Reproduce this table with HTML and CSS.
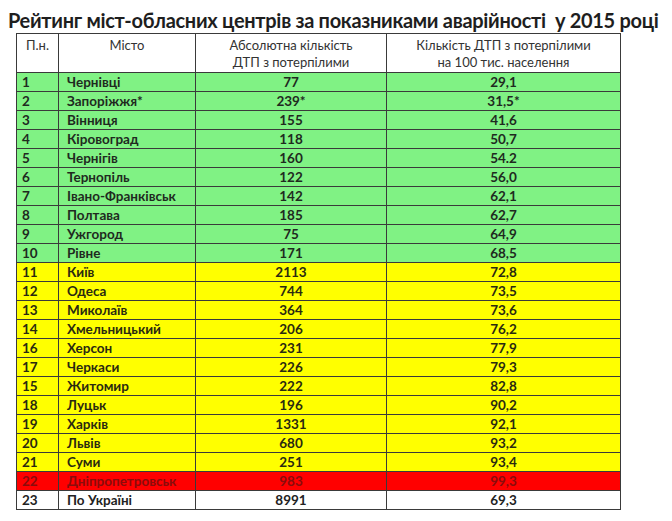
FILE: index.html
```html
<!DOCTYPE html>
<html lang="uk">
<head>
<meta charset="utf-8">
<link rel="stylesheet" href="styles.css">
</head>
<body>
<div class="page">
  <h1 class="title">Рейтинг міст-обласних центрів за показниками аварійності&nbsp; у 2015 році</h1>
  <table class="rating">
    <colgroup>
      <col class="c-num"><col class="c-city"><col class="c-abs"><col class="c-rel">
    </colgroup>
    <thead>
      <tr><th>П.н.</th><th>Місто</th><th>Абсолютна кількість<br>ДТП з потерпілими</th><th>Кількість ДТП з потерпілими<br>на 100 тис. населення</th></tr>
    </thead>
    <tbody>
      <tr class="g"><td>1</td><td>Чернівці</td><td>77</td><td>29,1</td></tr>
      <tr class="g"><td>2</td><td>Запоріжжя*</td><td>239*</td><td>31,5*</td></tr>
      <tr class="g"><td>3</td><td>Вінниця</td><td>155</td><td>41,6</td></tr>
      <tr class="g"><td>4</td><td>Кіровоград</td><td>118</td><td>50,7</td></tr>
      <tr class="g"><td>5</td><td>Чернігів</td><td>160</td><td>54.2</td></tr>
      <tr class="g"><td>6</td><td>Тернопіль</td><td>122</td><td>56,0</td></tr>
      <tr class="g"><td>7</td><td>Івано-Франківськ</td><td>142</td><td>62,1</td></tr>
      <tr class="g"><td>8</td><td>Полтава</td><td>185</td><td>62,7</td></tr>
      <tr class="g"><td>9</td><td>Ужгород</td><td>75</td><td>64,9</td></tr>
      <tr class="g"><td>10</td><td>Рівне</td><td>171</td><td>68,5</td></tr>
      <tr class="y"><td>11</td><td>Київ</td><td>2113</td><td>72,8</td></tr>
      <tr class="y"><td>12</td><td>Одеса</td><td>744</td><td>73,5</td></tr>
      <tr class="y"><td>13</td><td>Миколаїв</td><td>364</td><td>73,6</td></tr>
      <tr class="y"><td>14</td><td>Хмельницький</td><td>206</td><td>76,2</td></tr>
      <tr class="y"><td>16</td><td>Херсон</td><td>231</td><td>77,9</td></tr>
      <tr class="y"><td>17</td><td>Черкаси</td><td>226</td><td>79,3</td></tr>
      <tr class="y"><td>15</td><td>Житомир</td><td>222</td><td>82,8</td></tr>
      <tr class="y"><td>18</td><td>Луцьк</td><td>196</td><td>90,2</td></tr>
      <tr class="y"><td>19</td><td>Харків</td><td>1331</td><td>92,1</td></tr>
      <tr class="y"><td>20</td><td>Львів</td><td>680</td><td>93,2</td></tr>
      <tr class="y"><td>21</td><td>Суми</td><td>251</td><td>93,4</td></tr>
      <tr class="r"><td>22</td><td>Дніпропетровськ</td><td>983</td><td>99,3</td></tr>
      <tr class="w"><td>23</td><td>По Україні</td><td>8991</td><td>69,3</td></tr>
    </tbody>
  </table>
</div>
</body>
</html>
```
FILE: styles.css
```css
html, body {
  margin: 0;
  padding: 0;
  background: #ffffff;
}
.page {
  padding: 8px 0 0 8px;
  font-family: Lato, "Open Sans", sans-serif;
  color: #222;
}
.title {
  margin: 0;
  font-size: 20px;
  line-height: 25px;
  letter-spacing: -0.3px;
  font-weight: 700;
  color: #1e1e1e;
  white-space: nowrap;
}
.rating {
  margin-left: 8px;
  border-collapse: collapse;
  width: 604px;
  table-layout: fixed;
  font-size: 13.5px;
}
.c-num { width: 42px; }
.c-city { width: 137px; }
.c-abs { width: 191px; }
.c-rel { width: 234px; }
.rating th, .rating td {
  border: 1px solid #3a3a3a;
  padding: 0;
}
.rating th {
  height: 35px;
  vertical-align: top;
  font-weight: 400;
  font-size: 13px;
  line-height: 17px;
  padding-top: 3px;
  color: #333;
}
.rating td {
  height: 18px;
  line-height: 18px;
  font-weight: 700;
  text-align: center;
  color: #1f2a1f;
}
.rating td:nth-child(1) {
  text-align: left;
  padding-left: 5px;
}
.rating td:nth-child(2) {
  text-align: left;
  padding-left: 8px;
}
.g td { background: #80f284; }
.y td { background: #ffff00; color: #2a2a10; }
.r td { background: #ff0000; color: #8a0c0c; }
.w td { background: #ffffff; color: #222; }
```
